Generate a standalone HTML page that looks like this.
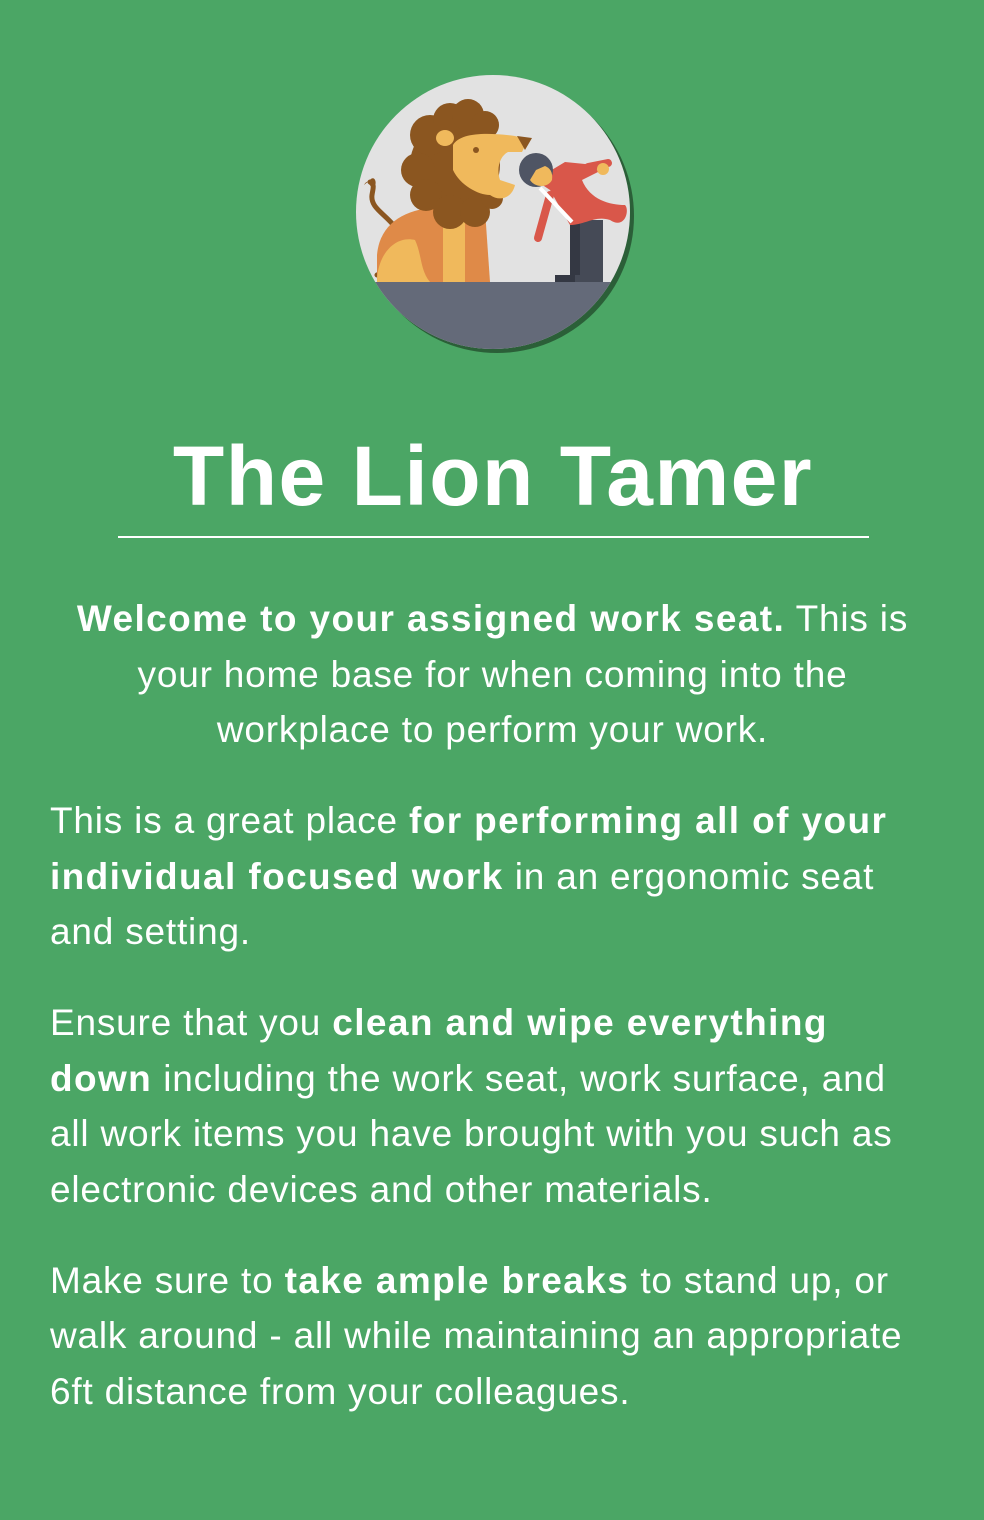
<!DOCTYPE html>
<html><head><meta charset="utf-8"><style>
html,body{margin:0;padding:0;}
body{width:984px;height:1520px;background:#4ba665;color:#fff;font-family:"Liberation Sans",Helvetica,Arial,sans-serif;position:relative;overflow:hidden;}
.art{position:absolute;left:350px;top:70px;}
h1{position:absolute;left:60px;width:866px;top:428px;margin:0;text-align:center;font-size:84px;font-weight:bold;line-height:96px;letter-spacing:1.5px;}
.rule{position:absolute;left:118px;width:751px;top:536px;height:2px;background:#fff;}
.txt{position:absolute;left:50px;width:875px;top:591px;font-size:37px;line-height:55.5px;font-weight:normal;letter-spacing:0.8px;}
.txt p{margin:0 0 35.5px 0;}
.txt p.c{text-align:center;padding:0 0 0 10px;}
b{font-weight:bold;letter-spacing:1.4px;}
</style></head><body>
<svg class="art" width="300" height="290" viewBox="0 0 300 290">
  <defs><clipPath id="cc"><circle cx="143" cy="142" r="137"/></clipPath></defs>
  <circle cx="147" cy="146" r="137" fill="#2b5f38"/>
  <circle cx="143" cy="142" r="137" fill="#e2e2e2"/>
  <g clip-path="url(#cc)">
    <rect x="0" y="212" width="300" height="80" fill="#646a79"/>
    <path d="M27 205 C40 200 60 190 50 165 C40 145 20 140 22 125 C23 118 25 115 20 112" fill="none" stroke="#8b5620" stroke-width="5" stroke-linecap="round"/>
    <path d="M14 115 C18 108 22 113 24 118 C28 112 24 105 20 110Z" fill="#8b5620"/>
    <path d="M27 212 L27 185 C30 150 60 137 95 137 L135 140 L140 212Z" fill="#df8a48"/>
    <path d="M27 212 C27 185 45 165 65 170 C72 185 70 200 80 212Z" fill="#f0b95c"/>
    <rect x="93" y="138" width="22" height="74" fill="#f0b95c"/>
    <path d="M115 212 C115 200 135 198 140 212Z" fill="#df8a48"/>
    <g fill="#8b5620">
      <circle cx="105" cy="95" r="45"/>
      <circle cx="80" cy="65" r="20"/><circle cx="100" cy="50" r="17"/><circle cx="118" cy="45" r="16"/><circle cx="135" cy="55" r="14"/>
      <circle cx="68" cy="100" r="17"/><circle cx="76" cy="125" r="16"/><circle cx="100" cy="142" r="17"/><circle cx="125" cy="142" r="15"/><circle cx="142" cy="128" r="11"/>
    </g>
    <ellipse cx="95" cy="68" rx="9" ry="8" fill="#f0b95c"/>
    <path d="M103 75 C110 63 135 62 165 66 L178 70 L172 82 L158 82 C150 86 146 98 150 110 L165 115 C162 128 150 132 140 125 C128 125 110 115 103 100Z" fill="#f0b95c"/>
    <path d="M167 66 L182 68 L175 80Z" fill="#8b5620"/>
    <circle cx="126" cy="80" r="3" fill="#8b5620"/>
    <rect x="220" y="150" width="33" height="62" fill="#454a56"/>
    <rect x="205" y="205" width="20" height="7" fill="#343843"/>
    <rect x="220" y="150" width="10" height="55" fill="#343843"/>
    <path d="M185 110 L215 92 L245 95 L248 102 L232 110 C240 130 260 135 275 135 C280 140 275 160 260 150 C245 145 235 155 220 155 L200 120Z" fill="#d9574a"/>
    <path d="M238 97 L258 93" stroke="#d9574a" stroke-width="8" stroke-linecap="round"/>
    <circle cx="253" cy="99" r="6" fill="#f0b95c"/>
    <path d="M200 125 L188 168" stroke="#d9574a" stroke-width="8" stroke-linecap="round"/>
    <path d="M190 118 L222 152" stroke="#fff" stroke-width="4"/>
    <circle cx="186" cy="100" r="17" fill="#4f5564"/>
    <path d="M186 100 L180 110 C185 118 198 118 202 110 C203 102 200 98 195 96 Z" fill="#f0b95c"/>
  </g>
</svg>
<h1>The Lion Tamer</h1>
<div class="rule"></div>
<div class="txt">
<p class="c"><b>Welcome to your assigned work seat.</b> This is your home base for when coming into the workplace to perform your work.</p>
<p>This is a great place <b>for performing all of your individual focused work</b> in an ergonomic seat and setting.</p>
<p>Ensure that you <b>clean and wipe everything down</b> including the work seat, work surface, and all work items you have brought with you such as electronic devices and other materials.</p>
<p>Make sure to <b>take ample breaks</b> to stand up, or walk around - all while maintaining an appropriate 6ft distance from your colleagues.</p>
</div>
</body></html>
